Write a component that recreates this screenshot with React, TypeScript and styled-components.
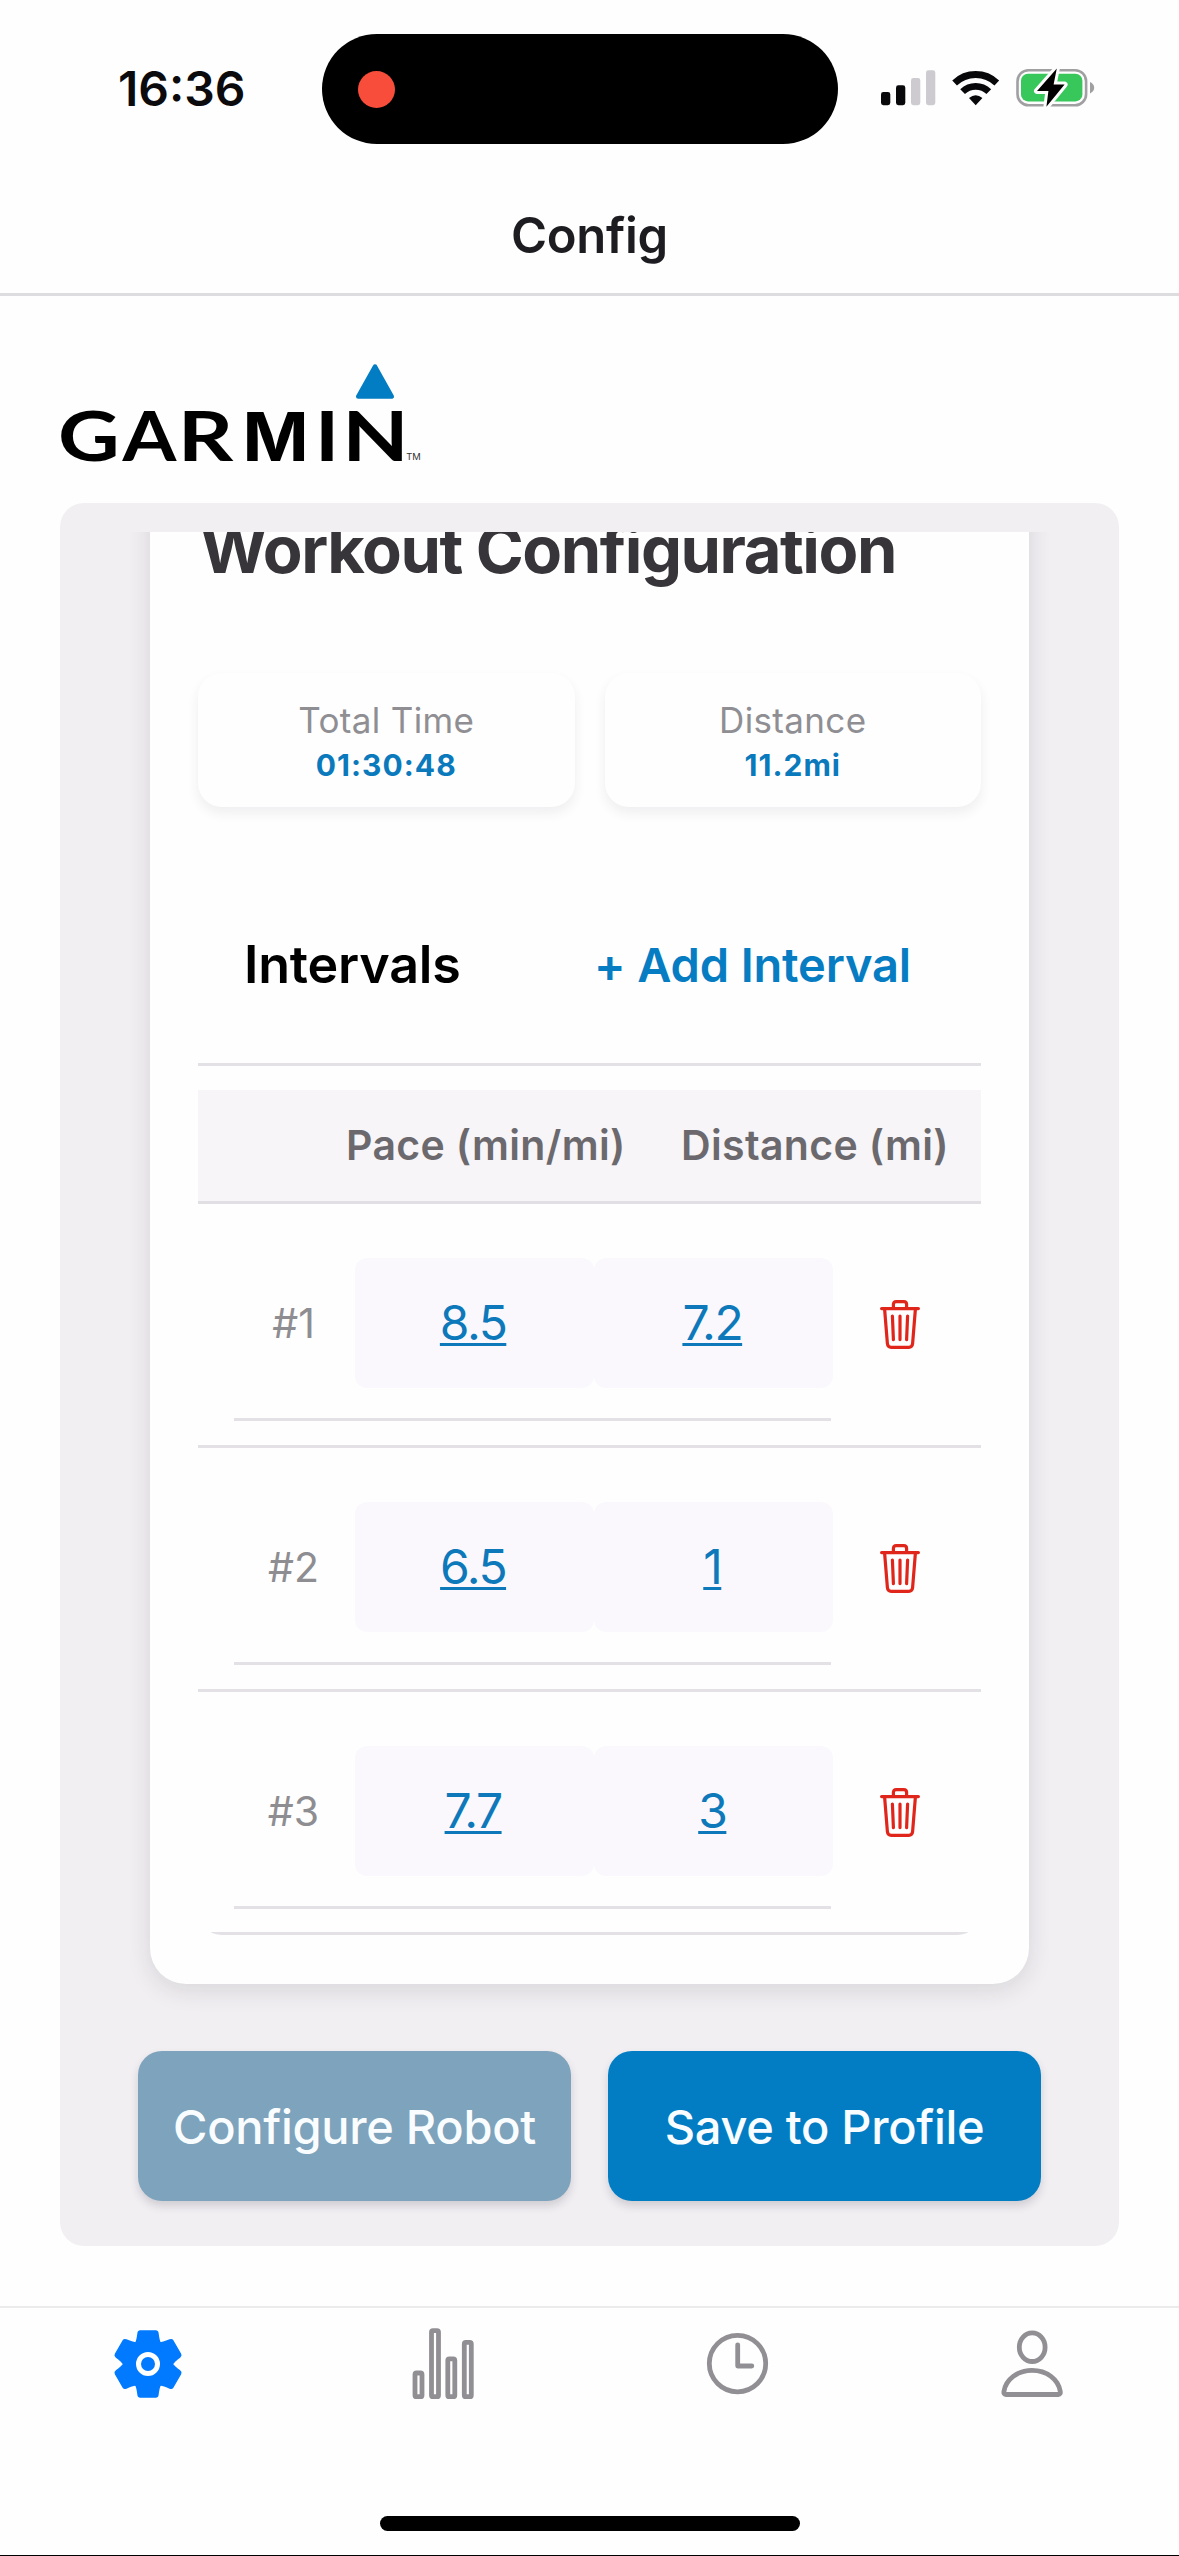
import React from "react";
import styled, { createGlobalStyle } from "styled-components";

const GlobalStyle = createGlobalStyle`
  html, body { margin: 0; padding: 0; background: #fefefe; }
  *, *::before, *::after { box-sizing: border-box; }
  body { font-family: Inter, "Liberation Sans", sans-serif; }
`;

const Screen = styled.div`
  width: 1179px;
  height: 2556px;
  overflow: hidden;
  display: flex;
  flex-direction: column;
  background: #fefefe;
  border-bottom: 1px solid #000;
`;

const StatusBar = styled.header`
  height: 178px;
  display: grid;
  grid-template-columns: 322px 516px 1fr;
  align-items: center;
`;

const Clock = styled.time`
  padding-left: 118px;
  font-size: 48px;
  line-height: 58px;
  font-weight: 600;
  color: #0b0a0d;
  white-space: nowrap;
`;

const Island = styled.div`
  height: 110px;
  border-radius: 55px;
  background: #000;
  display: flex;
  align-items: center;
  padding-left: 36px;
`;

const RecordingDot = styled.span`
  width: 37px;
  height: 37px;
  border-radius: 50%;
  background: #f94d3c;
`;

const StatusIcons = styled.div`
  padding-left: 32px;
  display: flex;
  svg { display: block; }
`;

const NavBar = styled.div`
  height: 118px;
  display: flex;
  align-items: center;
  justify-content: center;
  border-bottom: 3px solid #dddcdf;
`;

const NavTitle = styled.h1`
  margin: 0;
  font-size: 49px;
  line-height: 60px;
  font-weight: 600;
  letter-spacing: -0.3px;
  color: #1d1c20;
`;

const Brand = styled.div`
  height: 207px;
  padding: 64px 0 0 60px;
  svg { display: block; overflow: visible; }
`;

const Panel = styled.main`
  height: 1743px;
  margin: 0 60px;
  padding: 29px 70px 0;
  border-radius: 24px;
  background: #f1eff2;
  display: flex;
  flex-direction: column;
`;

const ScrollArea = styled.div`
  height: 1500px;
  overflow: hidden;
  padding: 0 20px;
`;

const Card = styled.section`
  margin-top: -60px;
  height: 1512px;
  padding: 38px 48px 0;
  border-radius: 36px;
  background: #fefefe;
  box-shadow: 0 6px 24px rgba(40, 30, 50, 0.12);
`;

const CardTitle = styled.h2`
  margin: 0 0 83px 2px;
  font-size: 65px;
  line-height: 80px;
  font-weight: 700;
  letter-spacing: -1.45px;
  white-space: nowrap;
  color: #373539;
`;

const Stats = styled.div`
  display: grid;
  grid-template-columns: 1fr 1fr;
  gap: 30px;
`;

const Stat = styled.div`
  height: 134px;
  padding-top: 26px;
  border-radius: 24px;
  background: #fefefe;
  box-shadow: 0 6px 12px rgba(60, 50, 80, 0.08);
  display: flex;
  flex-direction: column;
  align-items: center;
`;

const StatLabel = styled.span`
  font-size: 35px;
  line-height: 43px;
  letter-spacing: 0.35px;
  color: #8f8e93;
`;

const StatValue = styled.span`
  font-size: 30px;
  line-height: 47px;
  font-weight: 700;
  letter-spacing: 1.05px;
  color: #0a7abd;
`;

const IntervalsBar = styled.div`
  margin-top: 60px;
  height: 199px;
  padding: 0 70px 0 46px;
  display: flex;
  align-items: center;
  justify-content: space-between;
  border-bottom: 3px solid #e3e1e5;
`;

const IntervalsTitle = styled.h3`
  margin: 0;
  font-size: 52px;
  line-height: 60px;
  font-weight: 600;
  letter-spacing: -0.2px;
  color: #000;
`;

const AddButton = styled.button`
  border: 0;
  padding: 0;
  background: none;
  font-family: inherit;
  font-size: 47px;
  line-height: 60px;
  font-weight: 600;
  letter-spacing: -0.15px;
  color: #067cc2;
  white-space: nowrap;
`;

const Table = styled.div`
  margin-top: 24px;
  border-radius: 0 0 24px 24px;
  overflow: hidden;
`;

const TableHead = styled.div`
  height: 114px;
  padding: 0 0 2px 148px;
  display: flex;
  align-items: center;
  background: #f7f5f8;
  border-bottom: 3px solid #e1dfe3;
`;

const ColumnName = styled.span<{ $width: number }>`
  width: ${(p) => p.$width}px;
  font-size: 41px;
  line-height: 50px;
  font-weight: 600;
  letter-spacing: 0.35px;
  white-space: nowrap;
  color: #6b696d;
`;

const Row = styled.div`
  height: 243.8px;
  padding-left: 36px;
  display: flex;
  border-bottom: 3px solid #e3e1e5;
`;

const RowFields = styled.div`
  width: 597px;
  height: 217px;
  padding-top: 54px;
  display: flex;
  align-items: flex-start;
  border-bottom: 3px solid #e3e1e5;
`;

const RowLabel = styled.span`
  flex: none;
  width: 121px;
  padding-right: 2px;
  text-align: center;
  font-size: 41px;
  line-height: 130px;
  color: #8e8d91;
`;

const Field = styled.span`
  flex: none;
  width: 239.2px;
  height: 130px;
  padding-right: 3px;
  border-radius: 12px;
  background: #faf8fc;
  text-align: center;
  font-size: 48px;
  line-height: 130px;
  letter-spacing: -1.5px;
  color: #0e79ba;
  text-decoration: underline;
  text-decoration-thickness: 3px;
  text-underline-offset: 3px;
  text-decoration-skip-ink: none;
`;

const DeleteButton = styled.button`
  width: 40px;
  height: 49px;
  margin: 96px 0 0 49px;
  padding: 0;
  border: 0;
  background: none;
  svg { display: block; }
`;

const Actions = styled.div`
  margin-top: 19px;
  padding: 0 8px;
  display: grid;
  grid-template-columns: 1fr 1fr;
  gap: 37px;
`;

const ActionButton = styled.button<{ $muted?: boolean }>`
  height: 150px;
  border: 0;
  padding: 0;
  border-radius: 24px;
  background: ${(p) => (p.$muted ? "#7ea3bc" : "#027dc4")};
  box-shadow: 0 5px 9px rgba(40, 40, 60, 0.17);
  font-family: inherit;
  font-size: 47px;
  font-weight: 500;
  letter-spacing: -0.3px;
  white-space: nowrap;
  color: #fafdff;
`;

const TabBar = styled.nav`
  margin-top: 60px;
  height: 249px;
  border-top: 2px solid #ebebec;
  display: flex;
  flex-direction: column;
  align-items: center;
`;

const Tabs = styled.div`
  width: 100%;
  height: 208px;
  padding: 16px 0 0 1px;
  display: grid;
  grid-template-columns: repeat(4, 1fr);
  justify-items: center;
  align-items: start;
  svg { display: block; }
`;

const HomeIndicator = styled.div`
  width: 420px;
  height: 15px;
  border-radius: 8px;
  background: #000;
`;

const StatusGlyphs = () => (
  <svg width="226" height="48" viewBox="870 65 226 48">
    <g fill="#08070a">
      <rect x="881" y="92" width="9.3" height="13.2" rx="2.4" />
      <rect x="896" y="85.3" width="9.3" height="19.9" rx="2.4" />
      <rect x="911" y="78" width="9.3" height="27.2" rx="2.4" fill="#cdcbcf" />
      <rect x="926" y="70.3" width="9.3" height="34.9" rx="2.4" fill="#cdcbcf" />
    </g>
    <g fill="none" stroke="#08070a" strokeWidth="6.8">
      <path d="M954.6 83 A30.5 30.5 0 0 1 996.8 83" />
      <path d="M962.6 91.6 A19 19 0 0 1 988.8 91.6" />
    </g>
    <path d="M975.7 105.3 L969 98 Q975.7 92.6 982.4 98 Z" fill="#08070a" />
    <rect x="1017.5" y="70.2" width="68.6" height="35" rx="11" fill="none" stroke="#a09fa1" strokeWidth="2.6" />
    <path d="M1090 82 Q1094.2 84 1094.2 87.7 Q1094.2 91.4 1090 93.4 Z" fill="#a09fa1" />
    <rect x="1021" y="73.8" width="61.4" height="27.6" rx="7" fill="#37c75a" />
    <path
      d="M1056.8 68.4 L1037 91 H1048.4 L1046.4 106.8 L1064.6 84.6 H1053.6 Z"
      fill="#000"
      stroke="#fefefe"
      strokeWidth="6"
      strokeLinejoin="round"
      paintOrder="stroke"
    />
  </svg>
);

/* Each letter of the wordmark has its own origin and horizontal stretch. */
const wordmark = [
  { letter: "G", x: 58.1, stretch: 1.25, family: "Lato" },
  { letter: "A", x: 122.6, stretch: 1.14, family: "Lato" },
  { letter: "R", x: 177.8, stretch: 1.27, family: "Lato" },
  { letter: "M", x: 242.6, stretch: 1.045, family: "Inter" },
  { letter: "I", x: 314.9, stretch: 1.2, family: "Lato" },
  { letter: "N", x: 342.2, stretch: 1.27, family: "Lato" },
];

const GarminLogo = () => (
  <svg width="366" height="104" viewBox="60 360 366 104" role="img" aria-label="Garmin">
    <path
      d="M375 366.5 L391.8 396.5 H358.2 Z"
      fill="#027dc4"
      stroke="#027dc4"
      strokeWidth="4.5"
      strokeLinejoin="round"
    />
    <g fontWeight="700" fontSize="68" fill="#000">
      {wordmark.map((g) => (
        <text
          key={g.letter}
          transform={`translate(${g.x} 460.6) scale(${g.stretch} 1)`}
          fontFamily={`${g.family}, sans-serif`}
        >
          {g.letter}
        </text>
      ))}
    </g>
    <text x="406.3" y="460.2" fontFamily="Inter, sans-serif" fontSize="9.4" fill="#333">
      TM
    </text>
  </svg>
);

const TrashIcon = () => (
  <svg width="40" height="49" viewBox="0 0 40 49" fill="none" stroke="#e0261b" strokeWidth="3.2" strokeLinecap="round" strokeLinejoin="round">
    <path d="M1.6 8.6 H38.4" />
    <path d="M13.4 8 V4.6 Q13.4 1.7 16.2 1.7 H23.8 Q26.6 1.7 26.6 4.6 V8" />
    <path d="M4.6 9 L7.4 43.6 Q7.8 47.3 11.2 47.3 H28.8 Q32.2 47.3 32.6 43.6 L35.4 9" />
    <path d="M12.4 16 L13.4 39.6 M20 16 V39.6 M27.6 16 L26.6 39.6" />
  </svg>
);

const TOOTH =
  "M-14 -19 C-11.5 -23 -11.2 -27 -10.6 -31 Q-10.2 -33.8 -7.8 -33.8 H7.8 Q10.2 -33.8 10.6 -31 C11.2 -27 11.5 -23 14 -19 Z";

const GearIcon = () => (
  <svg width="80" height="80" viewBox="-40 -40 80 80">
    <g fill="#017aff">
      <circle r="25" />
      {[0, 60, 120, 180, 240, 300].map((a) => (
        <path key={a} d={TOOTH} transform={`rotate(${a})`} />
      ))}
    </g>
    <circle r="9.5" fill="none" stroke="#fefefe" strokeWidth="5" />
  </svg>
);

const ChartIcon = () => (
  <svg width="80" height="80" viewBox="402.5 2324 80 80" fill="none" stroke="#918f93" strokeWidth="4.8">
    <rect x="414.5" y="2373" width="7" height="23.7" rx="1.5" />
    <rect x="431" y="2330.6" width="7" height="66.1" rx="1.5" />
    <rect x="447.3" y="2358.8" width="7" height="37.9" rx="1.5" />
    <rect x="463.8" y="2342.4" width="7" height="54.3" rx="1.5" />
  </svg>
);

const ClockIcon = () => (
  <svg width="80" height="80" viewBox="697 2324 80 80" fill="none" stroke="#918f93" strokeWidth="4.8" strokeLinecap="round" strokeLinejoin="round">
    <circle cx="737.5" cy="2363.6" r="28.2" />
    <path d="M737.7 2344.8 V2366 H751.8" />
  </svg>
);

const PersonIcon = () => (
  <svg width="80" height="80" viewBox="991.6 2324 80 80" fill="none" stroke="#918f93" strokeWidth="4.8" strokeLinejoin="round">
    <ellipse cx="1031.8" cy="2347.2" rx="12.9" ry="14.3" />
    <path d="M1005.4 2394.5 Q1003 2394.5 1003.6 2391.2 C1005.5 2379.5 1017 2370.4 1031.7 2370.4 C1046.4 2370.4 1057.9 2379.5 1059.8 2391.2 Q1060.4 2394.5 1058 2394.5 Z" />
  </svg>
);

const intervals = [
  { pace: "8.5", distance: "7.2" },
  { pace: "6.5", distance: "1" },
  { pace: "7.7", distance: "3" },
];

export default function App() {
  return (
    <>
      <GlobalStyle />
      <Screen>
        <StatusBar>
          <Clock>16:36</Clock>
          <Island>
            <RecordingDot />
          </Island>
          <StatusIcons>
            <StatusGlyphs />
          </StatusIcons>
        </StatusBar>
        <NavBar>
          <NavTitle>Config</NavTitle>
        </NavBar>
        <Brand>
          <GarminLogo />
        </Brand>
        <Panel>
          <ScrollArea>
            <Card>
              <CardTitle>Workout Configuration</CardTitle>
              <Stats>
                <Stat>
                  <StatLabel>Total Time</StatLabel>
                  <StatValue>01:30:48</StatValue>
                </Stat>
                <Stat>
                  <StatLabel>Distance</StatLabel>
                  <StatValue>11.2mi</StatValue>
                </Stat>
              </Stats>
              <IntervalsBar>
                <IntervalsTitle>Intervals</IntervalsTitle>
                <AddButton>+ Add Interval</AddButton>
              </IntervalsBar>
              <Table>
                <TableHead>
                  <ColumnName $width={335}>Pace (min/mi)</ColumnName>
                  <ColumnName $width={270}>Distance (mi)</ColumnName>
                </TableHead>
                {intervals.map((it, i) => (
                  <Row key={i}>
                    <RowFields>
                      <RowLabel>#{i + 1}</RowLabel>
                      <Field>{it.pace}</Field>
                      <Field>{it.distance}</Field>
                    </RowFields>
                    <DeleteButton aria-label="Delete interval">
                      <TrashIcon />
                    </DeleteButton>
                  </Row>
                ))}
              </Table>
            </Card>
          </ScrollArea>
          <Actions>
            <ActionButton $muted>Configure Robot</ActionButton>
            <ActionButton>Save to Profile</ActionButton>
          </Actions>
        </Panel>
        <TabBar>
          <Tabs>
            <GearIcon />
            <ChartIcon />
            <ClockIcon />
            <PersonIcon />
          </Tabs>
          <HomeIndicator />
        </TabBar>
      </Screen>
    </>
  );
}
